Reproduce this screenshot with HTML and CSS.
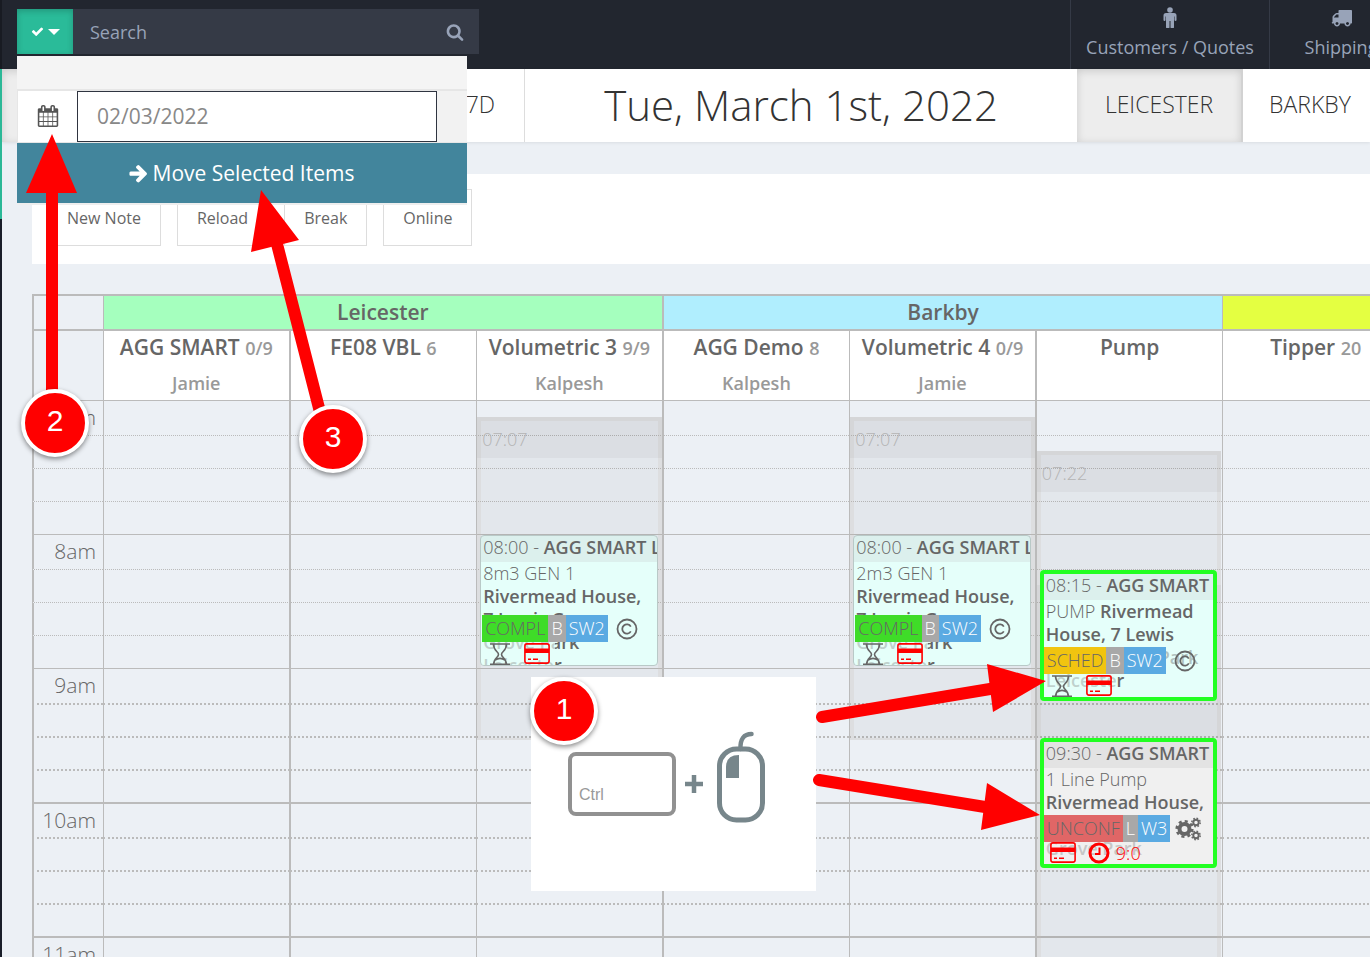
FILE: index.html
```html
<!DOCTYPE html>
<html lang="en">
<head>
<meta charset="utf-8">
<title>Schedule</title>
<link rel="stylesheet" href="styles.css">
</head>
<body>
<svg class="defs" aria-hidden="true">
  <symbol id="i-copy" viewBox="0 0 22 22"><circle cx="11" cy="11" r="9.5" fill="none" stroke="currentColor" stroke-width="1.8"/><path d="M14.8 8.6A4.6 4.6 0 1 0 14.8 13.4" fill="none" stroke="currentColor" stroke-width="1.8"/></symbol>
  <symbol id="i-glass" viewBox="0 0 20 22"><path d="M0 1h20M3.500 1C3.500 8 8.500 8.500 8.500 11.500S3.500 15 3.500 22M16.500 1c0 7-5 7.500-5 10.500s5 3.500 5 10.500M5 17c3-2 7-2 10 0M0 21.200h20" fill="none" stroke="currentColor" stroke-width="1.600"/></symbol>
  <symbol id="i-card" viewBox="0 0 26 21"><rect x=".9" y=".9" width="24.200" height="19.200" rx="2" fill="none" stroke="currentColor" stroke-width="1.600"/><path d="M1 5.500h24v4.500H1zM4 15.500h3v1.500H4zM9 15.500h5v1.500H9z" fill="currentColor"/></symbol>
  <symbol id="i-clock" viewBox="0 0 22 22"><circle cx="11" cy="11" r="9" fill="none" stroke="currentColor" stroke-width="3"/><path d="M11.500 5.500v6.500H7" fill="none" stroke="currentColor" stroke-width="2"/></symbol>
  <symbol id="i-cogs" viewBox="0 0 26 24"><g fill="none" stroke="currentColor"><circle cx="9" cy="12" r="5" stroke-width="4"/><circle cx="9" cy="12" r="7.800" stroke-width="2.600" stroke-dasharray="3.060 3.060"/><circle cx="20.500" cy="5.500" r="2.700" stroke-width="1.900"/><circle cx="20.500" cy="5.500" r="4.200" stroke-width="1.500" stroke-dasharray="1.650 1.650"/><circle cx="20.500" cy="18.500" r="2.700" stroke-width="1.900"/><circle cx="20.500" cy="18.500" r="4.200" stroke-width="1.500" stroke-dasharray="1.650 1.650"/></g></symbol>
</svg>
<div class="rail"></div>
<div class="page">
  <header class="topbar">
    <form class="search">
      <button class="search-toggle" type="button" aria-label="Selection actions">
        <svg width="13" height="13" viewBox="0 0 1792 1792" fill="currentColor"><path d="M1671 566q0 40-28 68l-724 724-136 136q-28 28-68 28t-68-28l-136-136-362-362q-28-28-28-68t28-68l136-136q28-28 68-28t68 28l294 295 656-657q28-28 68-28t68 28l136 136q28 28 28 68z"/></svg>
        <svg width="12" height="6" viewBox="0 0 12 6" fill="currentColor"><path d="M0 0h12L6 6z"/></svg>
      </button>
      <input class="search-input" type="text" placeholder="Search" aria-label="Search">
      <button class="search-go" type="button" aria-label="Search">
        <svg width="18" height="18" viewBox="0 0 1792 1792" fill="currentColor"><path d="M1216 832q0-185-131.500-316.500t-316.500-131.500-316.500 131.500-131.500 316.500 131.500 316.500 316.500 131.500 316.500-131.500 131.500-316.500zm512 832q0 52-38 90t-90 38q-54 0-90-38l-343-342q-179 124-399 124-143 0-273.500-55.500t-225-150-150-225-55.500-273.500 55.500-273.500 150-225 225-150 273.500-55.500 273.500 55.500 225 150 150 225 55.500 273.500q0 220-124 399l343 343q37 37 37 90z"/></svg>
      </button>
      <div class="menu">
        <div class="menu-head"></div>
        <div class="menu-date">
          <label class="menu-icon" for="move-date" aria-label="Move to date">
            <svg width="22" height="22" viewBox="0 0 1792 1792" fill="currentColor"><path d="M192 1664h288v-288h-288v288zm352 0h320v-288h-320v288zm-352-352h288v-320h-288v320zm352 0h320v-320h-320v320zm-352-384h288v-288h-288v288zm736 736h320v-288h-320v288zm-384-736h320v-288h-320v288zm768 736h288v-288h-288v288zm-384-352h320v-320h-320v320zm-352-864v-288q0-13-9.500-22.500t-22.500-9.500h-64q-13 0-22.500 9.500t-9.500 22.500v288q0 13 9.500 22.500t22.500 9.500h64q13 0 22.500-9.500t9.500-22.500zm736 864h288v-320h-288v320zm-384-384h320v-288h-320v288zm384 0h288v-288h-288v288zm32-480v-288q0-13-9.500-22.500t-22.500-9.500h-64q-13 0-22.500 9.500t-9.500 22.500v288q0 13 9.500 22.500t22.500 9.500h64q13 0 22.500-9.500t9.500-22.500zm384-64v1280q0 52-38 90t-90 38h-1408q-52 0-90-38t-38-90v-1280q0-52 38-90t90-38h128v-96q0-66 47-113t113-47h64q66 0 113 47t47 113v96h384v-96q0-66 47-113t113-47h64q66 0 113 47t47 113v96h128q52 0 90 38t38 90z"/></svg>
          </label>
          <input id="move-date" class="menu-input" type="text" value="02/03/2022">
        </div>
        <button class="menu-move" type="button">
          <svg width="20" height="20" viewBox="0 0 1792 1792" fill="currentColor"><path d="M1700 960q0 54-37 91l-651 651q-39 37-91 37-51 0-90-37l-75-75q-38-38-38-91t38-91l293-293h-804q-52 0-84.500-37.500t-32.500-90.500v-128q0-53 32.500-90.500t84.500-37.500h804l-293-294q-38-36-38-90t38-90l75-75q38-38 90-38 53 0 91 38l651 651q37 35 37 90z"/></svg>
          Move Selected Items
        </button>
      </div>
    </form>
    <nav class="nav">
      <a class="nav-item" href="#">
        <svg width="14" height="21" viewBox="0 0 14 21" fill="currentColor"><circle cx="7" cy="3" r="2.800"/><path d="M3 6h8q2.500 0 2.500 2.500V13a1 1 0 0 1-2 0V9.500H11V20a1.200 1.200 0 0 1-3.500 0v-6h-1v6A1.200 1.200 0 0 1 3 20V9.500h-.5V13a1 1 0 0 1-2 0V8.500Q.5 6 3 6z"/></svg>
        Customers / Quotes
      </a>
      <a class="nav-item nav-item-last" href="#">
        <svg width="21" height="21" viewBox="0 0 1792 1792" fill="currentColor"><path d="M640 1408q0-52-38-90t-90-38-90 38-38 90 38 90 90 38 90-38 38-90zm-384-512h384v-256h-158q-13 0-22 9l-195 195q-9 9-9 22v30zm1280 512q0-52-38-90t-90-38-90 38-38 90 38 90 90 38 90-38 38-90zm256-1088v1024q0 15-4 26.500t-13.500 18.500-16.500 11.500-23.500 6-22.500 2-25.500 0-22.500-.5q0 106-75 181t-181 75-181-75-75-181h-384q0 106-75 181t-181 75-181-75-75-181h-64q-3 0-22.500.5t-25.500 0-22.500-2-23.500-6-16.500-11.500-13.500-18.500-4-26.500q0-26 19-45t45-19v-320q0-8-.5-35t0-38 2.500-34.500 6.500-37 14-30.500 22.500-30l198-198q19-19 50.500-32t58.500-13h160v-192q0-26 19-45t45-19h1024q26 0 45 19t19 45z"/></svg>
        Shipping
      </a>
    </nav>
  </header>

  <div class="datebar">
    <div class="range">
      <button class="tab tab-on" type="button" aria-label="Day view"></button>
      <button class="tab" type="button">7D</button>
    </div>
    <h1 class="title">Tue, March 1st, 2022</h1>
    <div class="sites">
      <button class="tab tab-on" type="button">LEICESTER</button>
      <button class="tab tab-last" type="button">BARKBY</button>
    </div>
  </div>

  <main class="content">
    <div class="actions">
      <button class="action" type="button">New Note</button>
      <button class="action" type="button">Reload</button>
      <button class="action" type="button">Break</button>
      <button class="action" type="button">Online</button>
    </div>

    <div class="calendar">
      <table class="grid">
        <colgroup><col class="axis-col"><col span="7"></colgroup>
        <thead>
          <tr class="groups"><td></td><th class="g-green" colspan="3">Leicester</th><th class="g-blue" colspan="3">Barkby</th><th class="g-lime"></th></tr>
          <tr class="units">
            <td></td>
            <th>AGG SMART <small>0/9</small><span>Jamie</span></th>
            <th>FE08 VBL <small>6</small></th>
            <th>Volumetric 3 <small>9/9</small><span>Kalpesh</span></th>
            <th>AGG Demo <small>8</small><span>Kalpesh</span></th>
            <th>Volumetric 4 <small>0/9</small><span>Jamie</span></th>
            <th>Pump</th>
            <th>Tipper <small>20</small></th>
          </tr>
        </thead>
        <tbody>
          <tr class="hour"><th>7am</th><td></td><td></td><td></td><td></td><td></td><td></td><td></td></tr>
          <tr><th></th><td></td><td></td><td></td><td></td><td></td><td></td><td></td></tr>
          <tr><th></th><td></td><td></td><td></td><td></td><td></td><td></td><td></td></tr>
          <tr><th></th><td></td><td></td><td></td><td></td><td></td><td></td><td></td></tr>
          <tr class="hour"><th>8am</th><td></td><td></td><td></td><td></td><td></td><td></td><td></td></tr>
          <tr><th></th><td></td><td></td><td></td><td></td><td></td><td></td><td></td></tr>
          <tr><th></th><td></td><td></td><td></td><td></td><td></td><td></td><td></td></tr>
          <tr><th></th><td></td><td></td><td></td><td></td><td></td><td></td><td></td></tr>
          <tr class="hour"><th>9am</th><td></td><td></td><td></td><td></td><td></td><td></td><td></td></tr>
        </tbody>
        <tbody class="heavy">
          <tr><th></th><td></td><td></td><td></td><td></td><td></td><td></td><td></td></tr>
          <tr><th></th><td></td><td></td><td></td><td></td><td></td><td></td><td></td></tr>
          <tr><th></th><td></td><td></td><td></td><td></td><td></td><td></td><td></td></tr>
          <tr class="hour"><th>10am</th><td></td><td></td><td></td><td></td><td></td><td></td><td></td></tr>
          <tr><th></th><td></td><td></td><td></td><td></td><td></td><td></td><td></td></tr>
          <tr><th></th><td></td><td></td><td></td><td></td><td></td><td></td><td></td></tr>
          <tr><th></th><td></td><td></td><td></td><td></td><td></td><td></td><td></td></tr>
          <tr class="hour"><th>11am</th><td></td><td></td><td></td><td></td><td></td><td></td><td></td></tr>
          <tr><th></th><td></td><td></td><td></td><td></td><td></td><td></td><td></td></tr>
        </tbody>
      </table>

      <div class="lanes">
        <div></div><div></div><div></div>
        <div class="lane">
          <div class="shift shift-707"><div class="shift-head">07:07</div></div>
          <article class="event at-800">
            <div class="event-head">08:00 - <b>AGG SMART L</b></div>
            <div class="event-body">8m3 GEN 1 <br><b>Rivermead House,<br>7 Lewis Grove<br>Grove Park<br>Leicester</b></div>
            <div class="marks">
              <div class="tags"><span class="tag tag-green">COMPL</span><span class="tag tag-gray">B</span><span class="tag tag-blue">SW2</span><svg class="tag-icon" width="22" height="22"><use href="#i-copy"/></svg></div>
              <div class="signs"><svg class="glass" width="20" height="22"><use href="#i-glass"/></svg><svg class="red" width="26" height="21"><use href="#i-card"/></svg></div>
            </div>
          </article>
        </div>
        <div></div>
        <div class="lane">
          <div class="shift shift-707"><div class="shift-head">07:07</div></div>
          <article class="event at-800">
            <div class="event-head">08:00 - <b>AGG SMART L</b></div>
            <div class="event-body">2m3 GEN 1 <br><b>Rivermead House,<br>7 Lewis Grove<br>Grove Park<br>Leicester</b></div>
            <div class="marks">
              <div class="tags"><span class="tag tag-green">COMPL</span><span class="tag tag-gray">B</span><span class="tag tag-blue">SW2</span><svg class="tag-icon" width="22" height="22"><use href="#i-copy"/></svg></div>
              <div class="signs"><svg class="glass" width="20" height="22"><use href="#i-glass"/></svg><svg class="red" width="26" height="21"><use href="#i-card"/></svg></div>
            </div>
          </article>
        </div>
        <div class="lane">
          <div class="shift shift-722"><div class="shift-head">07:22</div></div>
          <div class="shift shift-815"></div>
          <article class="event picked at-815">
            <div class="event-head">08:15 - <b>AGG SMART</b></div>
            <div class="event-body">PUMP <b>Rivermead<br>House, 7 Lewis<br>Grove Grove Park<br>Leicester</b></div>
            <div class="marks">
              <div class="tags"><span class="tag tag-amber">SCHED</span><span class="tag tag-gray">B</span><span class="tag tag-blue">SW2</span><svg class="tag-icon" width="22" height="22"><use href="#i-copy"/></svg></div>
              <div class="signs"><svg class="glass" width="20" height="22"><use href="#i-glass"/></svg><svg class="red" width="26" height="21"><use href="#i-card"/></svg></div>
            </div>
          </article>
          <article class="event picked plain at-930">
            <div class="event-head">09:30 - <b>AGG SMART</b></div>
            <div class="event-body">1 Line Pump <br><b>Rivermead House,<br>7 Lewis Grove<br>Grove Park</b></div>
            <div class="marks">
              <div class="tags"><span class="tag tag-red">UNCONF</span><span class="tag tag-gray">L</span><span class="tag tag-blue">W3</span><svg class="tag-icon tag-icon-near" width="27" height="24"><use href="#i-cogs"/></svg></div>
              <div class="signs signs-left"><svg class="red" width="26" height="21"><use href="#i-card"/></svg><svg class="red" width="22" height="22"><use href="#i-clock"/></svg><span class="red">9:0</span></div>
            </div>
          </article>
        </div>
      </div>
    </div>
  </main>
</div>

<div class="notes">
  <div class="hint">
    <kbd class="key">Ctrl</kbd>
    <svg width="18" height="18" viewBox="0 0 18 18"><path d="M9 0v18M0 9h18" stroke="#77868b" stroke-width="4.500"/></svg>
    <svg class="mouse" width="48" height="92" viewBox="0 0 48 92" fill="none" stroke="#77868b"><rect x="2.500" y="18" width="43" height="71" rx="17" stroke-width="5"/><path d="M23.500 18C23 8 27 3 34.500 3" stroke-width="4.500" stroke-linecap="round"/><path d="M22 24v23H9V36q0-12 13-12z" fill="#77868b" stroke="none"/></svg>
  </div>
  <svg class="arrows" width="1370" height="957" viewBox="0 0 1370 957" fill="#f00" stroke="#f00">
    <path d="M52 395V190M320 412 277 244M822 717l168-28M819 780l166 27" stroke-width="12" fill="none" stroke-linecap="round"/>
    <path d="M52 134l25 59H26zM261 190l38 50-48 12zM1046 681l-53 31-6-48zM1040 815l-59 15 6-47z" stroke="none"/>
  </svg>
  <span class="step step-1">1</span>
  <span class="step step-2">2</span>
  <span class="step step-3">3</span>
</div>
</body>
</html>
```
FILE: styles.css
```css
* { box-sizing: border-box; }
body {
  margin: 0;
  height: 100vh;
  overflow: hidden;
  display: flex;
  position: relative;
  background: #ecf0f5;
  color: #666;
  font: 16px/24px "Open Sans", sans-serif;
}
button, input { font: inherit; color: inherit; border: 0; margin: 0; padding: 0; border-radius: 0; outline: 0; }
svg { flex: none; display: block; }
.defs { position: absolute; width: 0; height: 0; }
.red { color: #f00; }

.rail { width: 2px; flex: none; background: linear-gradient(#181b22 69px, #2bb897 69px, #2bb897 219px, #1a1e29 219px); }
.page { flex: 1; min-width: 0; overflow: hidden; }

/* Top bar */
.topbar { height: 69px; display: flex; background: #22262f; color: #98a3b8; font-size: 18px; }
.search { position: relative; display: flex; width: 462px; height: 45px; margin: 9px 0 0 15px; background: #353a46; }
.search-toggle { width: 56px; display: flex; align-items: center; justify-content: center; gap: 4px; background: #2abb99; color: #fff; box-shadow: inset 0 2px 6px rgba(0, 0, 0, .2); }
.search-input { flex: 1; min-width: 0; padding: 0 17px; background: transparent; }
.search-input::placeholder { color: #98a3b8; opacity: 1; }
.search-go { width: 48px; display: flex; align-items: center; justify-content: center; background: transparent; }
.nav { display: flex; margin-left: auto; }
.nav-item { display: flex; flex-direction: column; align-items: center; gap: 7px; width: 199px; padding-top: 7px; border-left: 1px solid #353a46; color: inherit; text-decoration: none; }
.nav-item-last { width: 143px; margin-right: -42px; }

/* Drop-down under the search box */
.menu { position: absolute; z-index: 3; left: 0; top: 47px; width: 450px; border-bottom: 2px solid #eee; color: #555; }
.menu-head { height: 35px; background: #f4f4f4; border-bottom: 2px solid #e6e6e6; }
.menu-date { display: flex; height: 52px; background: #f2f2f2; border-bottom: 1px solid #e6e6e6; }
.menu-icon { width: 60px; padding-bottom: 2px; display: flex; align-items: center; justify-content: center; background: #fff; border-left: 1px solid #e6e6e6; }
.menu-input { width: 360px; padding: 0 19px 2px; background: #fff; border: 1px solid #2f3440; color: #888; font-size: 21px; }
.menu-move { width: 100%; height: 60px; display: flex; align-items: center; justify-content: center; gap: 5px; padding-right: 2px; background: #42859c; color: #fff; font-size: 21px; }

/* Date bar */
.datebar { height: 73px; display: flex; background: #fff; color: #333; box-shadow: 0 1px 3px rgba(0, 0, 0, .08); }
.range, .sites { display: flex; }
.range { width: 523px; border-right: 1px solid #ddd; }
.sites { width: 300px; margin-right: -7px; }
.tab { padding-bottom: 3px; background: transparent; font-size: 23px; font-weight: 300; }
.range .tab { flex: 1; padding-right: 29px; text-align: right; }
.sites .tab { width: 166px; }
.sites .tab-last { flex: 1; }
.tab-on { background: #ededed; box-shadow: inset 0 2px 8px rgba(0, 0, 0, .15); border-right: 2px solid #d2d2d2; }
.title { flex: 1; margin: 0; font-size: 42px; line-height: 71px; font-weight: 300; text-align: center; }

/* Content */
.content { padding: 32px 0 0 30px; }
.actions { display: flex; gap: 16px; padding: 15px 15px 18px; background: #fff; }
.action { height: 57px; padding: 0 19px; border: 1px solid #ddd; background: #fff; }

.calendar { position: relative; width: calc(100% + 39px); margin-top: 30px; }
.grid { width: 100%; table-layout: fixed; border-collapse: separate; border-spacing: 0; }
.axis-col { width: 71px; }
.grid th, .grid td { padding: 0; border: 0 solid #bbb; border-left-width: 1px; }
.grid tr > :first-child { border-left-width: 2px; }
.grid thead th { font-weight: 600; }
.grid .groups > * { height: 35px; padding-bottom: 2px; border-top-width: 2px; font-size: 21px; }
.grid .units > * { height: 71px; border-top-width: 2px; vertical-align: top; font-size: 21px; line-height: 34px; }
.grid .units > * { line-height: 33px; }
.units th { background: #fff; }
.units small { font-size: 18px; color: #999; }
.units span { display: block; padding-top: 2px; font-size: 18px; color: #999; }
.grid .units > :nth-child(even), .grid tbody td:nth-child(even), .grid .g-green { border-right-width: 1px; }
.g-blue { background: #b0eefe; }
.g-green { background: #a5ffbe; }
.g-lime { background: #e4ff41; }
.grid tbody th, .grid tbody td { height: 33px; border-top: 1px dotted #bbb; }
.grid tbody .hour > * { height: 35px; border-top-style: solid; }
.grid .heavy th, .grid .heavy td { border-top-width: 2px; }
.grid tbody th { padding: 0 7px 2px 0; font-size: 21px; line-height: 30px; font-weight: 300; text-align: right; }

/* Events laid over the time grid */
.lanes { position: absolute; inset: 106px 0 0; display: grid; grid-template-columns: 71px repeat(7, 1fr); }
.lane { position: relative; margin-left: 1px; font-size: 18px; font-weight: 300; }
.lane b { font-weight: 600; }
.shift { position: absolute; left: 0; right: 1px; background: rgba(0, 0, 0, .035); border: 4px solid rgba(200, 190, 180, .2); border-bottom-width: 2px; }
.shift-head { margin: -4px -4px 0; height: 41px; padding: 10px 5px; background: rgba(0, 0, 0, .035); color: #b4b4b4; }
.shift-707 { top: 17px; height: 323px; }
.shift-722 { top: 51px; bottom: 0; }
.shift-815 { top: 185px; height: 153px; border-color: transparent; }
.event { position: absolute; left: 3px; right: 5px; height: 131px; overflow: hidden; border: 1px solid #b9c9c7; border-radius: 4px; background: #e5fffa; line-height: 23px; white-space: nowrap; }
.event-head { height: 26px; padding: 0 2px; overflow: hidden; background: rgba(110, 70, 90, .08); }
.event-body { padding: 0 2px; }
.marks { position: absolute; left: 1px; top: 79px; right: 0; bottom: 0; }
.tags { display: flex; align-items: center; width: 160px; height: 27px; background: rgba(229, 255, 250, .6); }
.tag { padding: 0 3px; line-height: 27px; }
.tag-green { background: #3fdc28; }
.tag-amber { background: #f1c40f; }
.tag-red { background: #e06666; }
.tag-gray { background: #a8a8a8; color: #fff; }
.tag-blue { background: #5aaae2; color: #fff; }
.tag-icon { margin-left: 8px; }
.tag-icon-near { margin-left: 5px; }
.signs { display: flex; align-items: flex-start; gap: 14px; width: 73px; height: 30px; padding: 1px 0 0 8px; background: rgba(229, 255, 250, .7); }
.picked { left: 3px; right: 5px; border: 4px solid #2f2; }
.picked .event-body { padding-left: 2px; }
.picked .marks { left: 0; top: 73px; }
.plain { background: #f0f0f0; }
.plain .event-head { background: rgba(0, 0, 0, .05); }
.plain .tags { background: rgba(240, 240, 240, .6); }
.plain .signs-left { gap: 12px; width: 98px; padding: 0 0 0 6px; background: rgba(240, 240, 240, .7); }
.signs-left span { margin-left: -6px; }
.at-800 { top: 135px; }
.at-815 { top: 170px; }
.at-930 { top: 338px; height: 130px; }

/* Callouts drawn above the page */
.notes { position: absolute; inset: 0; overflow: hidden; pointer-events: none; z-index: 5; }
.arrows { position: absolute; left: 0; top: 0; }
.hint { position: absolute; left: 531px; top: 677px; width: 285px; height: 214px; display: flex; align-items: center; gap: 9px; padding: 0 37px; background: #fff; }
.key { width: 108px; height: 64px; padding: 30px 7px 0; border: 4px solid #919191; border-radius: 8px; color: #999; font: 16px/18px "Liberation Sans", sans-serif; }
.mouse { margin-left: 5px; margin-bottom: 14px; }
.step { position: absolute; width: 68px; height: 68px; border: 4px solid #fff; border-radius: 50%; background: #f00; box-shadow: 0 2px 5px rgba(0, 0, 0, .45); color: #fff; font: 30px/56px "Liberation Sans", sans-serif; text-align: center; }
.step-1 { left: 530px; top: 677px; }
.step-2 { left: 21px; top: 389px; }
.step-3 { left: 299px; top: 405px; }
```
